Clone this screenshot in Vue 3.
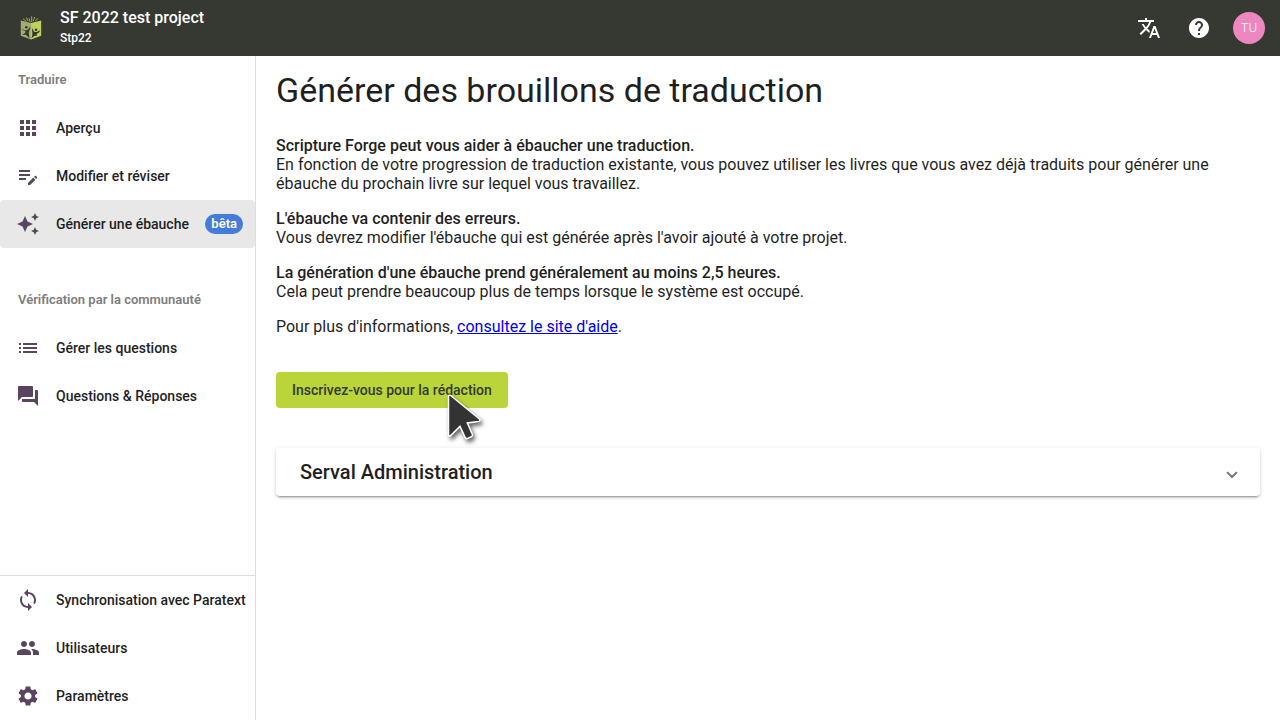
<script setup>
const icons = {
  apps: 'M4 8h4V4H4v4zm6 12h4v-4h-4v4zm-6 0h4v-4H4v4zm0-6h4v-4H4v4zm6 0h4v-4h-4v4zm6-10v4h4V4h-4zm-6 4h4V4h-4v4zm6 6h4v-4h-4v4zm0 6h4v-4h-4v4z',
  editNote: 'M3 10h11v2H3v-2zm0-2h11V6H3v2zm0 8h7v-2H3v2zm15.01-3.13.71-.71c.39-.39 1.02-.39 1.41 0l.71.71c.39.39.39 1.02 0 1.41l-.71.71-2.12-2.12zm-.71.71-5.3 5.3V21h2.12l5.3-5.3-2.12-2.12z',
  sparkle: 'M19 9l1.25-2.75L23 5l-2.75-1.25L19 1l-1.25 2.75L15 5l2.75 1.25L19 9zm-7.5.5L9 4 6.5 9.5 1 12l5.5 2.5L9 20l2.5-5.5L17 12l-5.5-2.5zM19 15l-1.25 2.75L15 19l2.75 1.25L19 23l1.25-2.75L23 19l-2.75-1.25L19 15z',
  list: 'M3 13h2v-2H3v2zm0 4h2v-2H3v2zm0-8h2V7H3v2zm4 4h14v-2H7v2zm0 4h14v-2H7v2zM7 7v2h14V7H7z',
  forum: 'M21 6h-2v9H6v2c0 .55.45 1 1 1h11l4 4V7c0-.55-.45-1-1-1zm-4 6V3c0-.55-.45-1-1-1H3c-.55 0-1 .45-1 1v14l4-4h10c.55 0 1-.45 1-1z',
  sync: 'M12 4V1L8 5l4 4V6c3.31 0 6 2.69 6 6 0 1.01-.25 1.97-.7 2.8l1.46 1.46C19.54 15.03 20 13.57 20 12c0-4.42-3.58-8-8-8zm0 14c-3.31 0-6-2.69-6-6 0-1.01.25-1.97.7-2.8L5.24 7.74C4.46 8.97 4 10.43 4 12c0 4.42 3.58 8 8 8v3l4-4-4-4v3z',
  people: 'M16 11c1.66 0 2.99-1.34 2.99-3S17.66 5 16 5c-1.66 0-3 1.34-3 3s1.34 3 3 3zm-8 0c1.66 0 2.99-1.34 2.99-3S9.66 5 8 5C6.34 5 5 6.34 5 8s1.34 3 3 3zm0 2c-2.33 0-7 1.17-7 3.5V19h14v-2.5c0-2.33-4.67-3.5-7-3.5zm8 0c-.29 0-.62.02-.97.05 1.16.84 1.97 1.97 1.97 3.45V19h6v-2.5c0-2.33-4.67-3.5-7-3.5z',
  settings: 'M19.14 12.94c.04-.3.06-.61.06-.94 0-.32-.02-.64-.07-.94l2.03-1.58c.18-.14.23-.41.12-.61l-1.92-3.32c-.12-.22-.37-.29-.59-.22l-2.39.96c-.5-.38-1.03-.7-1.62-.94l-.36-2.54c-.04-.24-.24-.41-.48-.41h-3.84c-.24 0-.43.17-.47.41l-.36 2.54c-.59.24-1.13.57-1.62.94l-2.39-.96c-.22-.08-.47 0-.59.22L2.74 8.87c-.12.21-.08.47.12.61l2.03 1.58c-.05.3-.09.63-.09.94s.02.64.07.94l-2.03 1.58c-.18.14-.23.41-.12.61l1.92 3.32c.12.22.37.29.59.22l2.39-.96c.5.38 1.03.7 1.62.94l.36 2.54c.05.24.24.41.48.41h3.84c.24 0 .44-.17.47-.41l.36-2.54c.59-.24 1.13-.56 1.62-.94l2.39.96c.22.08.47 0 .59-.22l1.92-3.32c.12-.22.07-.47-.12-.61l-2.01-1.58zM12 15.6c-1.98 0-3.6-1.62-3.6-3.6s1.62-3.6 3.6-3.6 3.6 1.62 3.6 3.6-1.62 3.6-3.6 3.6z'
}

const groups = [
  {
    title: 'Traduire',
    items: [
      { label: 'Aperçu', icon: icons.apps },
      { label: 'Modifier et réviser', icon: icons.editNote },
      { label: 'Générer une ébauche', icon: icons.sparkle, badge: 'bêta', active: true }
    ]
  },
  {
    title: 'Vérification par la communauté',
    items: [
      { label: 'Gérer les questions', icon: icons.list },
      { label: 'Questions & Réponses', icon: icons.forum }
    ]
  }
]

const footerItems = [
  { label: 'Synchronisation avec Paratext', icon: icons.sync },
  { label: 'Utilisateurs', icon: icons.people },
  { label: 'Paramètres', icon: icons.settings }
]
</script>

<template>
  <div class="app">
    <header class="toolbar">
      <a class="logo" href="#" aria-label="Scripture Forge">
        <svg width="22" height="24" viewBox="0 0 22 24">
          <path d="M.8 4.500 11 7v16.500L.8 19.800z" fill="#a3ac6c" />
          <path d="M11 7 21.200 4.500v15.300L11 23.500z" fill="#bfd05c" />
          <path d="M3 2.800 6.500 5.500M6.300 1.500 8 5M9 2l1 4M11.700.3V6M14.800 1 13.200 5M18 2.200 15.200 5.300" stroke="#a9b85c" stroke-width=".9" fill="none" />
          <circle cx="6.300" cy="11.300" r="1.300" fill="#353932" />
          <path d="M1.800 12.200c1.300 1.700 2.900 2.300 4.700 2l2.600-1.600.9-2.300.3 1.700-1.600 4.300.7 5.900-3.600-3.500-3.600.3 3.100-2.200V14.900C3.600 14.800 2.200 13.900 1.800 12.200z" fill="#353932" />
          <circle cx="16" cy="13.700" r="1.300" fill="#353932" />
          <path d="M11.800 11.500l2.200 4.200 2.200.3c1.500-.2 2.900-1 4-2.300-.3 2.200-1.800 3.500-3.500 4.100l.4 1.700-2.800.6-2.800 2.200.9-4z" fill="#353932" />
        </svg>
      </a>
      <div class="project">
        <span class="project-name">SF 2022 test project</span>
        <span class="project-short">Stp22</span>
      </div>
      <div class="actions">
        <button class="icon-button" aria-label="Langue">
          <svg width="24" height="24" viewBox="0 0 24 24"><path fill="currentColor" d="M12.870 15.070l-2.540-2.510.03-.03c1.740-1.940 2.980-4.170 3.710-6.530H17V4h-7V2H8v2H1v1.990h11.170C11.500 7.920 10.440 9.750 9 11.350 8.070 10.320 7.300 9.190 6.690 8h-2c.73 1.630 1.730 3.170 2.980 4.560l-5.090 5.020L4 19l5-5 3.110 3.110.76-2.040zM18.500 10h-2L12 22h2l1.120-3h4.750L21 22h2l-4.500-12zm-2.620 7l1.620-4.330L19.120 17h-3.240z" /></svg>
        </button>
        <button class="icon-button" aria-label="Aide">
          <svg width="24" height="24" viewBox="0 0 24 24"><path fill="currentColor" d="M12 2C6.480 2 2 6.480 2 12s4.480 10 10 10 10-4.480 10-10S17.520 2 12 2zm1 17h-2v-2h2v2zm2.070-7.750l-.9.920C13.450 12.900 13 13.500 13 15h-2v-.5c0-1.100.450-2.100 1.170-2.830l1.240-1.260c.37-.36.590-.86.590-1.410 0-1.100-.9-2-2-2s-2 .9-2 2H8c0-2.210 1.790-4 4-4s4 1.790 4 4c0 .88-.36 1.680-.93 2.250z" /></svg>
        </button>
        <button class="avatar">TU</button>
      </div>
    </header>

    <div class="body">
      <nav class="sidebar">
        <section v-for="group in groups" :key="group.title" class="group">
          <h2 class="group-title">{{ group.title }}</h2>
          <a v-for="item in group.items" :key="item.label" href="#" class="item" :class="{ active: item.active }">
            <svg class="item-icon" width="24" height="24" viewBox="0 0 24 24"><path fill="currentColor" :d="item.icon" /></svg>
            <span>{{ item.label }}</span>
            <span v-if="item.badge" class="badge">{{ item.badge }}</span>
          </a>
        </section>
        <section class="footer">
          <a v-for="item in footerItems" :key="item.label" href="#" class="item">
            <svg class="item-icon" width="24" height="24" viewBox="0 0 24 24"><path fill="currentColor" :d="item.icon" /></svg>
            <span>{{ item.label }}</span>
          </a>
        </section>
      </nav>

      <main class="content">
        <h1>Générer des brouillons de traduction</h1>
        <p>
          <strong>Scripture Forge peut vous aider à ébaucher une traduction.</strong><br />
          En fonction de votre progression de traduction existante, vous pouvez utiliser les livres que vous avez déjà traduits pour générer une ébauche du prochain livre sur lequel vous travaillez.
        </p>
        <p>
          <strong>L'ébauche va contenir des erreurs.</strong><br />
          Vous devrez modifier l'ébauche qui est générée après l'avoir ajouté à votre projet.
        </p>
        <p>
          <strong>La génération d'une ébauche prend généralement au moins 2,5 heures.</strong><br />
          Cela peut prendre beaucoup plus de temps lorsque le système est occupé.
        </p>
        <p>Pour plus d'informations, <a class="help-link" href="#">consultez le site d'aide</a>.</p>

        <div class="signup">
          <button class="signup-button">Inscrivez-vous pour la rédaction</button>
          <svg class="pointer" width="44" height="54" viewBox="0 0 44 54" aria-hidden="true">
            <path d="M4.500 5.500c0-1.200 1.300-1.700 2.200-1L35.400 28c1 .9.600 2.300-.7 2.500l-11.400 1.400 5 11.300c.5 1.100.1 2.100-1 2.600l-3.600 1.600c-1.100.5-2.100.1-2.600-1L16 35.400 6.600 44.600c-.9.900-2.100.4-2.100-.8z" fill="#333" stroke="#fff" stroke-width="1.500" />
          </svg>
        </div>

        <button class="panel" aria-expanded="false">
          <span>Serval Administration</span>
          <svg width="12" height="8" viewBox="0 0 12 8"><path d="M1.100 1.100 6 6l4.900-4.900" fill="none" stroke="#757575" stroke-width="2" /></svg>
        </button>
      </main>
    </div>
  </div>
</template>

<style>
body {
  margin: 0;
}
</style>

<style scoped>
.app {
  display: flex;
  flex-direction: column;
  min-height: 100vh;
  font-family: Roboto, "Liberation Sans", sans-serif;
  font-size: 16px;
  color: #1f1f1f;
  background: #fff;
}
button {
  border: 0;
  padding: 0;
  font-family: inherit;
  cursor: pointer;
}
svg {
  display: block;
  flex: none;
}
.toolbar {
  display: flex;
  align-items: center;
  height: 56px;
  padding: 0 15px 0 20px;
  box-sizing: border-box;
  background: #353932;
  color: #fff;
}
.logo {
  width: 40px;
}
.project {
  display: flex;
  flex-direction: column;
  padding-bottom: 2px;
  font-weight: 500;
}
.project-name {
  font-size: 16px;
  line-height: 22px;
}
.project-short {
  font-size: 12px;
  line-height: 18px;
}
.actions {
  display: flex;
  align-items: center;
  gap: 26px;
  margin-left: auto;
}
.icon-button {
  background: none;
  color: #fff;
}
.avatar {
  width: 32px;
  height: 32px;
  margin-left: -4px;
  padding-bottom: 2px;
  border-radius: 50%;
  background: #ec87bf;
  color: #fff;
  font-size: 13px;
  font-weight: 300;
}
.body {
  flex: 1;
  display: flex;
}
.sidebar {
  display: flex;
  flex-direction: column;
  flex: none;
  width: 255px;
  border-right: 1px solid #dedede;
}
.group {
  margin-bottom: 28px;
}
.group-title {
  margin: 0;
  padding: 0 18px;
  font-size: 13px;
  font-weight: 600;
  line-height: 48px;
  color: #7d7d7d;
}
.item {
  display: flex;
  align-items: center;
  height: 48px;
  padding-left: 16px;
  border-radius: 4px;
  color: #1f1f1f;
  font-size: 14px;
  font-weight: 500;
  text-decoration: none;
  white-space: nowrap;
}
.item.active {
  background: #e8e8e8;
}
.item-icon {
  margin-right: 16px;
  color: #594560;
}
.badge {
  margin: 0 12px 0 auto;
  padding: 0 6px;
  border-radius: 10px;
  background: #457bdb;
  color: #fff;
  font-size: 13px;
  font-weight: 600;
  line-height: 20px;
}
.footer {
  margin-top: auto;
  border-top: 1px solid #dedede;
}
.content {
  flex: 1;
  min-width: 0;
  padding: 14px 20px 20px;
}
h1 {
  margin: 0 0 26px;
  font-size: 34px;
  font-weight: 400;
  line-height: 40px;
}
p {
  margin: 0 0 16px;
  line-height: 19px;
}
strong {
  font-weight: 500;
}
.help-link {
  color: #0000ee;
}
.signup {
  position: relative;
  width: fit-content;
  margin: 36px 0 40px;
}
.signup-button {
  display: block;
  height: 36px;
  padding: 0 16px;
  border-radius: 4px;
  background: #bad53a;
  color: #353932;
  font-size: 14px;
  font-weight: 500;
}
.pointer {
  position: absolute;
  left: 168px;
  top: 19px;
  filter: drop-shadow(2px 3px 2px rgba(0, 0, 0, 0.6));
  pointer-events: none;
}
.panel {
  display: flex;
  align-items: center;
  justify-content: space-between;
  width: 100%;
  height: 48px;
  padding: 0 22px 0 24px;
  border-radius: 4px;
  background: #fff;
  color: #1f1f1f;
  font-size: 20px;
  font-weight: 500;
  box-shadow: 0 3px 1px -2px rgba(0, 0, 0, 0.2), 0 2px 2px rgba(0, 0, 0, 0.14), 0 1px 5px rgba(0, 0, 0, 0.12);
}
.panel svg {
  margin-top: 6px;
}
</style>
